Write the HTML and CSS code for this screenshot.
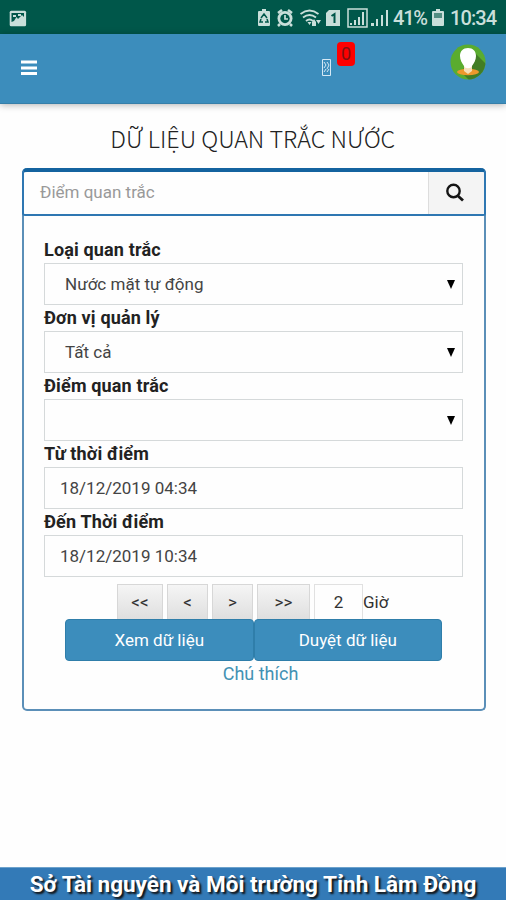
FILE: index.html
```html
<!DOCTYPE html>
<html lang="vi">
<head>
<meta charset="utf-8">
<meta name="viewport" content="width=device-width, initial-scale=1">
<title>Dữ liệu quan trắc nước</title>
<link rel="stylesheet" href="styles.css">
</head>
<body>
<div class="status">
  <svg class="status-photo" width="18" height="17" viewBox="0 0 18 17"><rect x=".7" y=".7" width="16.4" height="15.6" rx="1.5" fill="#c9dfda"/><path d="M2.5 3H15v4l-2-2-4 4-1.500-2L5 11l-2.500 1z" fill="#00574a"/><path d="M4 5h3v2H4zM9 4h3v2H9z" fill="#c9dfda"/></svg>
  <svg class="status-icons" width="134" height="20" viewBox="0 0 134 20" fill="#c9dfda">
    <path d="M4 1h4v2h3q1 0 1 1v13q0 1-1 1H1q-1 0-1-1V4q0-1 1-1h3z"/>
    <path d="M3 10l3-4 3 4M3 11l-1 3h3M9 11l1 3H7" fill="none" stroke="#00574a" stroke-width="1.500"/>
    <circle cx="27" cy="10.500" r="7.500"/><path d="M20 5l4-3M34 5l-4-3M22 16l-2 2M32 16l2 2" stroke="#c9dfda" stroke-width="2.500"/><circle cx="27" cy="10.500" r="4.700" fill="#00574a"/><path d="M27 7v4h3" fill="none" stroke="#c9dfda" stroke-width="1.700"/>
    <path d="M42.500 6q9-7 18 0M45 9.500q6.500-5 13 0M48 13q3.500-3 7 0" fill="none" stroke="#c9dfda" stroke-width="1.800"/><path d="M49.500 14h4l-2 3zM54 14l2-3 2 3v4h-4zM58 12h5l-2.500 4z"/>
    <path d="M71 2h11v16H68V5z"/><path d="M73.500 8l3-2v9" fill="none" stroke="#00574a" stroke-width="2"/>
    <path d="M90 1h19v18H90z" fill="none" stroke="#c9dfda" stroke-width="1.500"/>
    <path d="M92 15h2v2h-2zM96 12h2v5h-2zM100 9h2v8h-2zM104 4h2v13h-2zM113 15h3v3h-3zM118 11h2v7h-2zM123 7h2v11h-2zM128 2h2v16h-2z"/>
  </svg>
  <span class="battery-level">41%</span>
  <svg class="battery" width="12" height="18" viewBox="0 0 12 18"><path d="M4 0h4v2h3q1 0 1 1v13q0 1-1 1H1q-1 0-1-1V3q0-1 1-1h3z" fill="#c9dfda"/><path d="M2 4h8v5H2z" fill="#528e82"/></svg>
  <span class="clock">10:34</span>
</div>
<header class="header">
  <svg class="menu" width="16" height="16" viewBox="0 0 16 16"><path d="M0 2h16M0 8h16M0 13.500h16" stroke="#fff" stroke-width="2.800"/></svg>
  <div class="notice">
    <svg width="9" height="17" viewBox="0 0 9 17" fill="none" stroke="#d5e9f5"><path d="M.5.500h8v16h-8z"/><path d="M2 3l2 3-2 3M5 3l2 3-2 4M2 13l2-3M5 13l2-3" /></svg>
    <span class="badge">0</span>
  </div>
  <svg class="avatar" width="36" height="36" viewBox="0 0 36 36"><defs><clipPath id="disc"><circle cx="18" cy="18" r="17.500"/></clipPath></defs><g clip-path="url(#disc)"><path d="M0 0h36v36H0z" fill="#5aac2f"/><path d="M25 9l11 11v16H19L11 28z" fill="#427d25"/><ellipse cx="18" cy="28" rx="11" ry="3.200" fill="#ed982b"/><path d="M14 22h8v5l-4 3-4-3z" fill="#f5dfb8"/><path d="M18 4c5 0 8 3 8 8 0 4-2 7-4 10-1 3-7 3-8 0-2-3-4-6-4-10 0-5 3-8 8-8z" fill="#fff"/></g></svg>
</header>
<main class="main">
  <h1 class="title">DỮ LIỆU QUAN TRẮC NƯỚC</h1>
  <section class="panel">
    <div class="search">
      <div class="search-input">Điểm quan trắc</div>
      <div class="search-button"><svg width="20" height="20" viewBox="0 0 20 20" fill="none" stroke="#151515"><circle cx="8.500" cy="8" r="6.200" stroke-width="2.400"/><path d="M12.500 12.500l5.500 5" stroke-width="2.800"/></svg></div>
    </div>
    <div class="form">
      <div class="label">Loại quan trắc</div>
      <div class="field select"><span>Nước mặt tự động</span><i class="arrow"></i></div>
      <div class="label">Đơn vị quản lý</div>
      <div class="field select"><span>Tất cả</span><i class="arrow"></i></div>
      <div class="label">Điểm quan trắc</div>
      <div class="field select"><span></span><i class="arrow"></i></div>
      <div class="label">Từ thời điểm</div>
      <div class="field">18/12/2019 04:34</div>
      <div class="label">Đến Thời điểm</div>
      <div class="field">18/12/2019 10:34</div>
      <div class="steps">
        <div class="step first">&lt;&lt;</div><div class="step prev">&lt;</div><div class="step next">&gt;</div><div class="step last">&gt;&gt;</div>
        <div class="hours">2</div><span class="unit">Giờ</span>
      </div>
      <div class="actions"><div class="button">Xem dữ liệu</div><div class="button">Duyệt dữ liệu</div></div>
      <div class="note">Chú thích</div>
    </div>
  </section>
</main>
<footer class="footer">Sở Tài nguyên và Môi trường Tỉnh Lâm Đồng</footer>
</body>
</html>
```
FILE: styles.css
```css
* { box-sizing: border-box; }
body {
  margin: 0;
  height: 900px;
  display: flex;
  flex-direction: column;
  overflow: hidden;
  background: #fefefe;
  color: #333;
  font: 17px/26px Roboto, sans-serif;
}
.status {
  display: flex;
  align-items: center;
  height: 34px;
  padding: 2px 10px 0 9px;
  background: #00574a;
  color: #c9dfda;
  font-size: 20px;
  font-weight: 500;
}
.status svg { flex: none; }
.status-icons { margin-left: auto; }
.battery-level { width: 35px; margin-left: 1px; letter-spacing: -1.2px; }
.battery { margin: 0 6px 0 4px; }
.clock { width: 46px; letter-spacing: -.9px; white-space: nowrap; }
.header {
  display: flex;
  position: relative;
  height: 70px;
  flex: none;
  padding: 0 20px 0 21px;
  background: #3c8dbc;
  border-bottom: 1px solid #367fa9;
  box-shadow: 0 1px 7px rgba(0, 0, 0, .3);
}
.menu { margin-top: 26px; }
.notice { display: flex; margin: 8px 0 0 285px; }
.notice svg { margin-top: 17px; }
.badge {
  width: 18px;
  height: 24px;
  margin-left: 6px;
  border-radius: 4px;
  background: #fe0000;
  color: #801010;
  font-size: 18px;
  line-height: 24px;
  text-align: center;
}
.avatar { margin: 10px 0 0 auto; }
.main { flex: 1; padding: 14px 20.5px 0 22px; }
.title {
  height: 50px;
  margin: 0 2px 0 0;
  color: #222;
  font: 300 23.3px/41px "Noto Sans CJK SC", "Noto Sans", sans-serif;
  text-align: center;
  white-space: nowrap;
}
.panel {
  height: 543px;
  border: 2px solid #5b8fb8;
  border-top: 0;
  border-radius: 5px;
}
.search {
  display: flex;
  height: 48px;
  margin: 0 -2px;
  border: 2px solid #2e77b2;
  border-top: 4px solid #14639f;
  border-radius: 5px 5px 3px 3px;
  overflow: hidden;
}
.search-input { flex: 1; padding: 7px 16px; color: #999; }
.search-button {
  display: flex;
  align-items: center;
  justify-content: center;
  width: 56px;
  padding-right: 2px;
  border-left: 1px solid #ddd;
  background: #f4f4f4;
}
.form { padding: 21px 20.5px 0 20px; }
.label { height: 26px; color: #222; font-size: 18px; font-weight: 700; letter-spacing: .15px; }
.field {
  display: flex;
  align-items: center;
  height: 42px;
  padding: 0 15px;
  border: 1px solid #d5d9da;
  color: #444;
}
.select { padding: 0 7px 0 20px; }
.arrow {
  margin-left: auto;
  border: 4.5px solid transparent;
  border-top: 9px solid #000;
  border-bottom: 0;
}
.steps { display: flex; height: 42px; padding: 7px 0 0 73px; }
.step {
  height: 36px;
  margin-right: 4px;
  border: 1px solid #d7d7d7;
  background: linear-gradient(#f5f5f5, #dfdfdf);
  line-height: 34px;
  text-align: center;
}
.first { width: 46px; }
.prev, .next { width: 41px; }
.last { width: 53px; }
.hours { width: 49px; height: 36px; border: 1px solid #e1e1e1; line-height: 34px; text-align: center; }
.unit { line-height: 36px; }
.actions { display: flex; height: 42px; padding: 0 21px; }
.button {
  flex: 1;
  border: 1px solid #2f7eaa;
  border-radius: 4px;
  background: #3c8dbc;
  color: #fff;
  line-height: 40px;
  text-align: center;
}
.note { margin-left: 14px; color: #4291b3; font-size: 18px; text-align: center; line-height: 25px; }
.footer {
  height: 33px;
  flex: none;
  background: #337ab7;
  border-top: 1px solid #6da2cc;
  color: #fff;
  font-size: 22.5px;
  font-weight: 700;
  line-height: 32px;
  text-align: center;
  white-space: nowrap;
  text-shadow: 2px 2px 2px #111;
}
```
